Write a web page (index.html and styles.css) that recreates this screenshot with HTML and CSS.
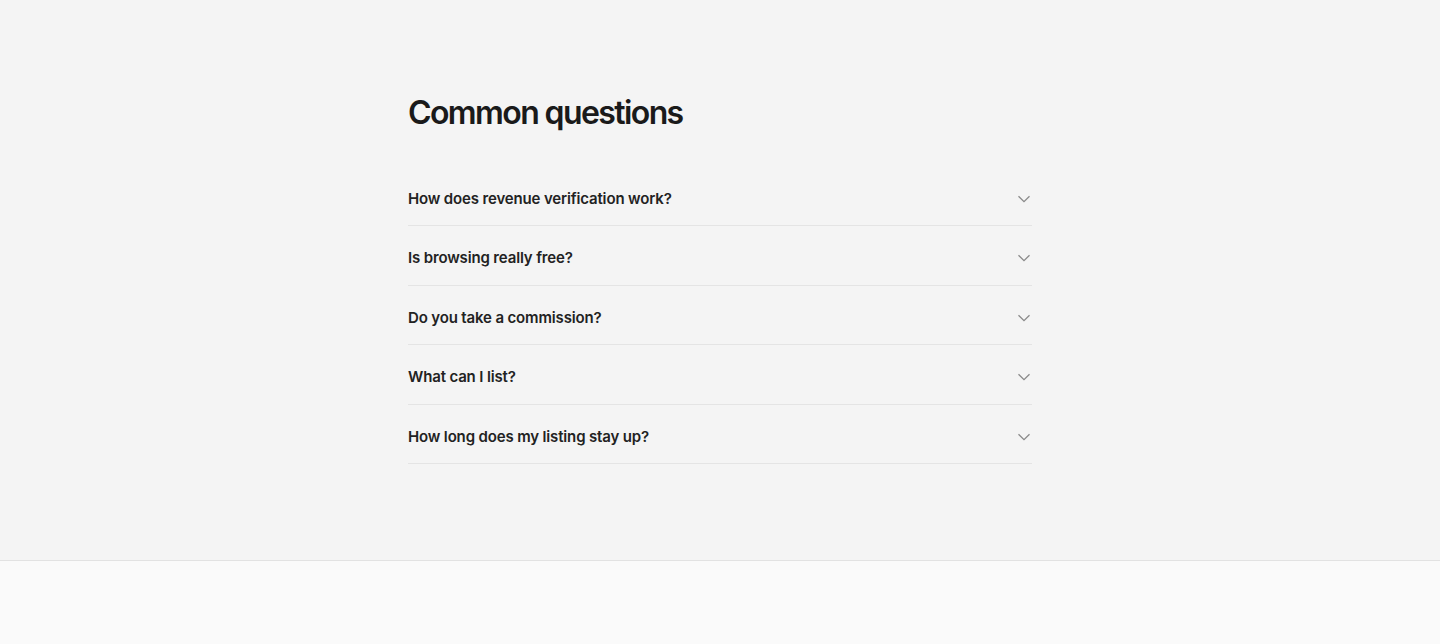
FILE: index.html
```html
<!DOCTYPE html>
<html lang="en">
<head>
<meta charset="utf-8">
<title>Common questions</title>
<link rel="stylesheet" href="styles.css">
</head>
<body>
<section class="faq">
  <div class="faq-inner">
    <h2 class="faq-title">Common questions</h2>
    <ul class="faq-list">
      <li class="faq-item"><span class="faq-q">How does revenue verification work?</span><svg class="chev" viewBox="0 0 14 8" width="14" height="8"><path d="M1.5 1.2l5.5 5.5 5.5-5.5" fill="none" stroke="currentColor" stroke-width="1.3"/></svg></li>
      <li class="faq-item"><span class="faq-q">Is browsing really free?</span><svg class="chev" viewBox="0 0 14 8" width="14" height="8"><path d="M1.5 1.2l5.5 5.5 5.5-5.5" fill="none" stroke="currentColor" stroke-width="1.3"/></svg></li>
      <li class="faq-item"><span class="faq-q">Do you take a commission?</span><svg class="chev" viewBox="0 0 14 8" width="14" height="8"><path d="M1.5 1.2l5.5 5.5 5.5-5.5" fill="none" stroke="currentColor" stroke-width="1.3"/></svg></li>
      <li class="faq-item"><span class="faq-q">What can I list?</span><svg class="chev" viewBox="0 0 14 8" width="14" height="8"><path d="M1.5 1.2l5.5 5.5 5.5-5.5" fill="none" stroke="currentColor" stroke-width="1.3"/></svg></li>
      <li class="faq-item"><span class="faq-q">How long does my listing stay up?</span><svg class="chev" viewBox="0 0 14 8" width="14" height="8"><path d="M1.5 1.2l5.5 5.5 5.5-5.5" fill="none" stroke="currentColor" stroke-width="1.3"/></svg></li>
    </ul>
  </div>
</section>
<footer class="footer"></footer>
</body>
</html>
```
FILE: styles.css
```css
html, body {
  margin: 0;
  padding: 0;
}
body {
  font-family: Inter, "Noto Sans", sans-serif;
  background: #fafafa;
  color: #1a1a1a;
}
.faq {
  background: #f4f4f4;
  border-bottom: 1px solid #e2e2e2;
  padding: 93px 0 96px;
}
.faq-inner {
  width: 624px;
  margin: 0 auto;
}
.faq-title {
  margin: 0 0 33.5px;
  font-size: 32px;
  line-height: 40px;
  font-weight: 600;
  letter-spacing: -0.05em;
  color: #1a1a1a;
}
.faq-list {
  list-style: none;
  margin: 0;
  padding: 0;
}
.faq-item {
  display: flex;
  align-items: center;
  justify-content: space-between;
  padding: 21px 0 15px;
  border-bottom: 1px solid #e4e4e4;
  line-height: 22.5px;
}
.faq-q {
  font-size: 15px;
  font-weight: 600;
  letter-spacing: -0.01em;
  color: #222;
}
.chev {
  color: #8a8a8a;
  margin-right: 1px;
}
.footer {
  height: 83px;
  background: #fafafa;
}
```
